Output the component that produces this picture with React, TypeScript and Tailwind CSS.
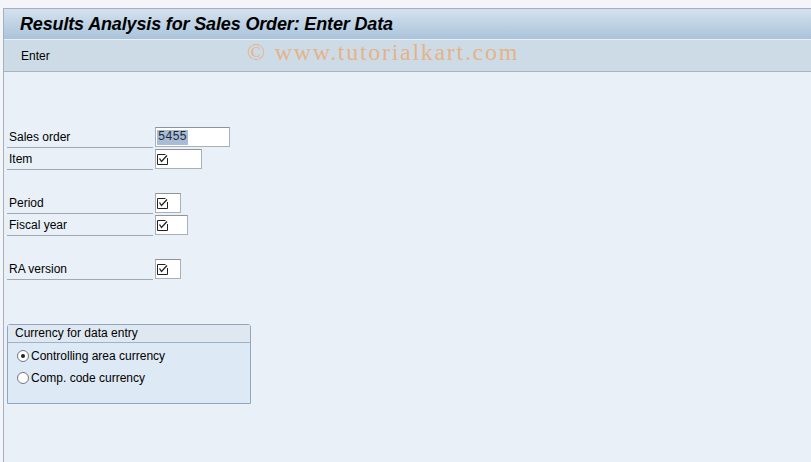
import React from "react";

function CheckGlyph() {
  return (
    <svg width="11" height="11" viewBox="0 0 11 11" className="block">
      <path d="M8.5 0.5 H0.5 V10.5 H10.5 V4" fill="white" stroke="#222" strokeWidth="1" />
      <path d="M2.5 4.5 L4.5 7.5 L10 1.5" fill="none" stroke="#222" strokeWidth="1.3" />
    </svg>
  );
}

function Field({ width, children }: { width: string; children?: React.ReactNode }) {
  return (
    <div
      className={`h-[20px] mt-[1px] ml-[2px] bg-white border border-[#a9b0b8] border-t-[#8c949c] flex items-center pl-[1px] ${width}`}
    >
      {children}
    </div>
  );
}

function Row({ label, width, children }: { label: string; width: string; children?: React.ReactNode }) {
  return (
    <div className="flex h-[22px]">
      <div className="w-[146px] border-b border-[#9fa9b4] pl-[2px] pt-[1px] text-[12px] leading-[20px] text-black">
        {label}
      </div>
      <Field width={width}>{children}</Field>
    </div>
  );
}

function Radio({ checked, label }: { checked?: boolean; label: string }) {
  return (
    <div className="flex items-center h-[22px] pl-[9px] gap-[2px]">
      <span className="w-[12px] h-[12px] rounded-full border border-[#6f7780] bg-white flex items-center justify-center">
        {checked && <span className="w-[4px] h-[4px] rounded-full bg-[#222]" />}
      </span>
      <span className="text-[12px] text-black">{label}</span>
    </div>
  );
}

export default function App() {
  return (
    <div className="w-[811px] h-[462px] overflow-hidden bg-[#f3f5f8] pt-[8px] pl-[3px] font-['Liberation_Sans',Arial,sans-serif]">
      <div className="h-full border-l border-t border-[#a3b0bd] bg-[#e9f0f8] flex flex-col">
        <div className="h-[31px] bg-gradient-to-b from-[#d4e2ee] to-[#aac3da] border-b border-[#e9f0f6] flex items-center pl-[16px]">
          <h1 className="text-[18px] font-bold italic text-black tracking-[-0.15px]">
            Results Analysis for Sales Order: Enter Data
          </h1>
        </div>
        <div className="relative h-[32px] bg-[#cddbe6] border-b border-[#a5b3c0] flex items-center pl-[17px]">
          <span className="text-[12px] text-black">Enter</span>
          <span className="absolute left-[243px] top-[-6px] font-['Liberation_Serif',serif] text-[24px] tracking-[1.7px] text-[#f0a35f] opacity-70">
            © www.tutorialkart.com
          </span>
        </div>

        <div className="pt-[54px] pl-[3px]">
          <Row label="Sales order" width="w-[75px]">
            <span className="font-['Liberation_Mono',monospace] text-[12px] leading-[15px] bg-[#a8bcd4] text-[#1b2a3a] px-[1px]">
              5455
            </span>
          </Row>
          <Row label="Item" width="w-[47px]">
            <CheckGlyph />
          </Row>
          <div className="h-[22px]" />
          <Row label="Period" width="w-[26px]">
            <CheckGlyph />
          </Row>
          <Row label="Fiscal year" width="w-[33px]">
            <CheckGlyph />
          </Row>
          <div className="h-[22px]" />
          <Row label="RA version" width="w-[26px]">
            <CheckGlyph />
          </Row>

          <div className="mt-[44px] w-[244px] h-[80px] border border-[#8ea6bf] rounded-t-[3px] bg-[#dde9f4]">
            <div className="h-[18px] border-b border-[#9cb2c8] bg-[#dfe8f1] pl-[7px] text-[12px] leading-[17px] text-black">
              Currency for data entry
            </div>
            <div className="pt-[2px]">
              <Radio checked label="Controlling area currency" />
              <Radio label="Comp. code currency" />
            </div>
          </div>
        </div>
      </div>
    </div>
  );
}
